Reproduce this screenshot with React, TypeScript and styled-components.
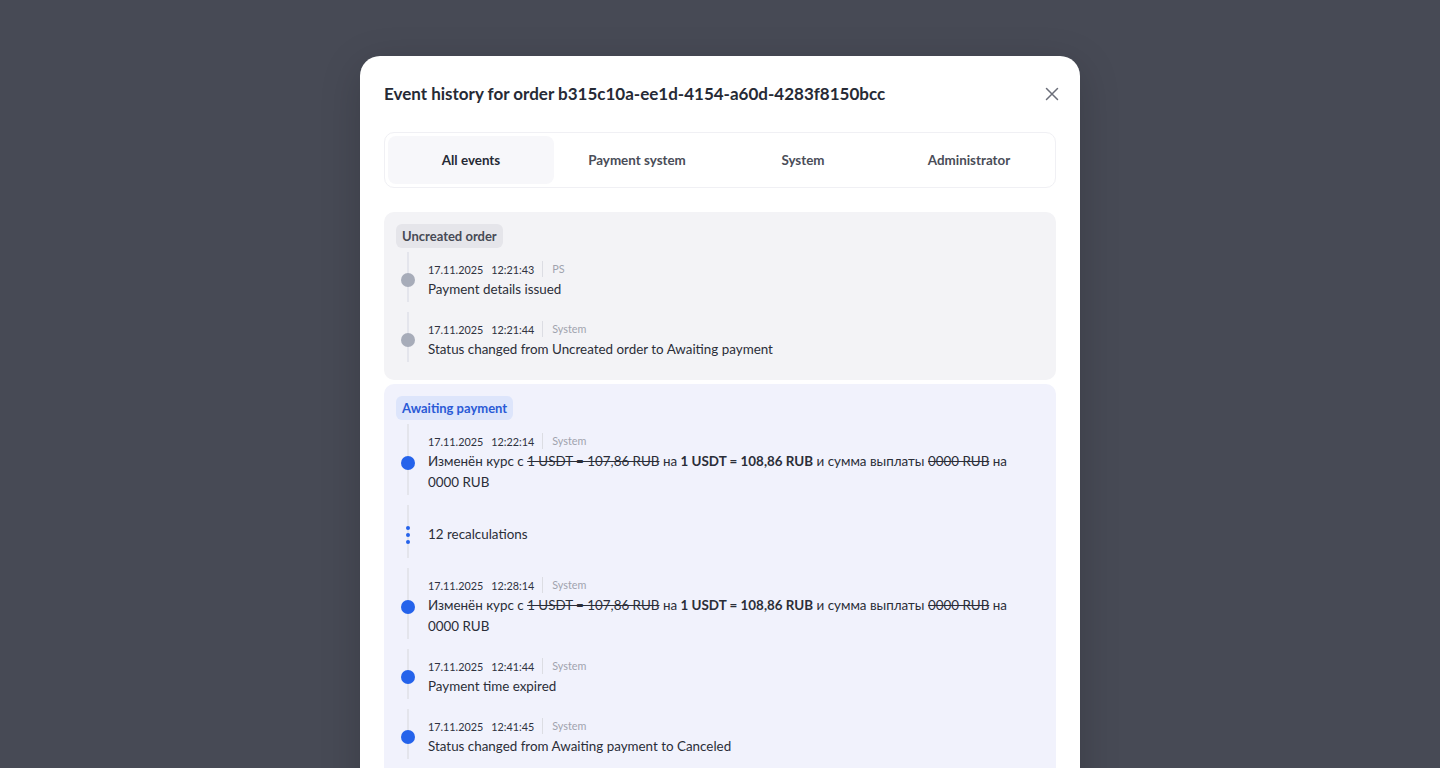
import React from 'react';
import styled, { createGlobalStyle } from 'styled-components';

const GlobalStyle = createGlobalStyle`
  html, body {
    margin: 0;
    padding: 0;
    height: 100%;
    overflow: hidden;
  }
  body {
    font-family: 'Lato', 'Noto Sans', sans-serif;
    background-color: #474a55;
  }
`;

const Overlay = styled.div`
  width: 1440px;
  height: 768px;
  overflow: hidden;
  background-color: #474a55;
  display: flex;
  justify-content: center;
  align-items: flex-start;
`;

const Modal = styled.div`
  width: 720px;
  margin-top: 56px;
  background-color: #ffffff;
  border-radius: 20px;
  padding: 24px 24px 40px;
  box-sizing: border-box;
  box-shadow: 0 10px 40px rgba(0, 0, 0, 0.18);
`;

const Header = styled.div`
  display: flex;
  align-items: center;
  justify-content: space-between;
  height: 28px;
`;

const Title = styled.h2`
  margin: 0;
  font-size: 17px;
  line-height: 28px;
  font-weight: 700;
  color: #262a35;
`;

const CloseButton = styled.button`
  width: 20px;
  height: 20px;
  padding: 0;
  margin-right: -6px;
  border: none;
  background: none;
  display: flex;
  align-items: center;
  justify-content: center;
  cursor: pointer;
`;

const Tabs = styled.div`
  margin-top: 24px;
  display: grid;
  grid-template-columns: repeat(4, 1fr);
  padding: 3px;
  border: 1px solid #f0f0f4;
  border-radius: 10px;
`;

const Tab = styled.div<{ $active?: boolean }>`
  height: 48px;
  display: flex;
  align-items: center;
  justify-content: center;
  border-radius: 8px;
  font-size: 13.4px;
  font-weight: 700;
  color: ${p => (p.$active ? '#262a35' : '#4a4d58')};
  background-color: ${p => (p.$active ? '#f7f7fa' : 'transparent')};
`;

const Groups = styled.div`
  margin-top: 24px;
  display: flex;
  flex-direction: column;
  gap: 4px;
`;

const Group = styled.div<{ $tone: 'gray' | 'blue' }>`
  background-color: ${p => (p.$tone === 'blue' ? '#f1f2fc' : '#f3f3f6')};
  border-radius: 10px;
  padding: 12px 12px 10px;
`;

const Badge = styled.span<{ $tone: 'gray' | 'blue' }>`
  display: inline-flex;
  align-items: center;
  height: 24px;
  padding: 0 6px;
  border-radius: 6px;
  font-size: 13px;
  font-weight: 700;
  background-color: ${p => (p.$tone === 'blue' ? '#dde5fb' : '#e5e5ea')};
  color: ${p => (p.$tone === 'blue' ? '#2a5ad6' : '#474a55')};
  margin-bottom: 2px;
`;

const Row = styled.div<{ $loose?: boolean }>`
  display: flex;
  align-items: center;
  padding: ${p => (p.$loose ? '21px 0' : '10px 0')};
`;

const Rail = styled.div<{ $loose?: boolean }>`
  position: relative;
  width: 24px;
  align-self: stretch;
  margin: ${p => (p.$loose ? '-21px 8px -21px 0' : '-10px 8px -10px 0')};
  display: flex;
  align-items: center;
  justify-content: center;

  &::before {
    content: '';
    position: absolute;
    left: 11px;
    width: 2px;
    top: 2px;
    bottom: 8px;
    background-color: #e4e5ec;
  }
`;

const Dot = styled.span<{ $tone: 'gray' | 'blue' }>`
  position: relative;
  width: 14px;
  height: 14px;
  border-radius: 50%;
  background-color: ${p => (p.$tone === 'blue' ? '#2563eb' : '#a7acb9')};
`;

const MoreDots = styled.span`
  position: relative;
  display: flex;
  flex-direction: column;
  gap: 3px;

  & > i {
    width: 4px;
    height: 4px;
    border-radius: 50%;
    background-color: #2563eb;
  }
`;

const Content = styled.div`
  flex: 1;
  max-width: 580px;
`;

const Meta = styled.div`
  display: flex;
  align-items: center;
  height: 18px;
  font-size: 10.8px;
  color: #2f3240;
  margin-bottom: 1px;
`;

const Time = styled.span`
  margin-left: 8px;
`;

const Source = styled.span`
  margin-left: 8px;
  padding-left: 9px;
  border-left: 1px solid #dcdde3;
  line-height: 16px;
  color: #a0a3ae;
`;

const Text = styled.div`
  font-size: 13.4px;
  line-height: 21px;
  color: #2b2e38;

  b {
    font-weight: 700;
  }
`;

type Ev = {
  date: string;
  time: string;
  source: string;
  body: React.ReactNode;
};

const rateChange = (
  <>
    Изменён курс с <s>1 USDT = 107,86 RUB</s> на <b>1 USDT = 108,86 RUB</b> и сумма выплаты <s>0000 RUB</s> на 0000 RUB
  </>
);

const EventRow: React.FC<{ ev: Ev; tone: 'gray' | 'blue' }> = ({ ev, tone }) => (
  <Row>
    <Rail>
      <Dot $tone={tone} />
    </Rail>
    <Content>
      <Meta>
        <span>{ev.date}</span>
        <Time>{ev.time}</Time>
        <Source>{ev.source}</Source>
      </Meta>
      <Text>{ev.body}</Text>
    </Content>
  </Row>
);

const CloseIcon = () => (
  <svg width="14" height="14" viewBox="0 0 14 14" fill="none">
    <path d="M1.5 1.5L12.5 12.5M12.5 1.5L1.5 12.5" stroke="#6b6e79" strokeWidth="1.5" strokeLinecap="round" />
  </svg>
);

const App: React.FC = () => {
  const first: Ev[] = [
    { date: '17.11.2025', time: '12:21:43', source: 'PS', body: 'Payment details issued' },
    { date: '17.11.2025', time: '12:21:44', source: 'System', body: 'Status changed from Uncreated order to Awaiting payment' },
  ];

  return (
    <Overlay>
      <GlobalStyle />
      <Modal>
        <Header>
          <Title>Event history for order b315c10a-ee1d-4154-a60d-4283f8150bcc</Title>
          <CloseButton aria-label="Close">
            <CloseIcon />
          </CloseButton>
        </Header>

        <Tabs>
          <Tab $active>All events</Tab>
          <Tab>Payment system</Tab>
          <Tab>System</Tab>
          <Tab>Administrator</Tab>
        </Tabs>

        <Groups>
          <Group $tone="gray">
            <Badge $tone="gray">Uncreated order</Badge>
            {first.map(ev => (
              <EventRow key={ev.time} ev={ev} tone="gray" />
            ))}
          </Group>

          <Group $tone="blue">
            <Badge $tone="blue">Awaiting payment</Badge>
            <EventRow tone="blue" ev={{ date: '17.11.2025', time: '12:22:14', source: 'System', body: rateChange }} />
            <Row $loose>
              <Rail $loose>
                <MoreDots>
                  <i />
                  <i />
                  <i />
                </MoreDots>
              </Rail>
              <Content>
                <Text>12 recalculations</Text>
              </Content>
            </Row>
            <EventRow tone="blue" ev={{ date: '17.11.2025', time: '12:28:14', source: 'System', body: rateChange }} />
            <EventRow tone="blue" ev={{ date: '17.11.2025', time: '12:41:44', source: 'System', body: 'Payment time expired' }} />
            <EventRow tone="blue" ev={{ date: '17.11.2025', time: '12:41:45', source: 'System', body: 'Status changed from Awaiting payment to Canceled' }} />
          </Group>
        </Groups>
      </Modal>
    </Overlay>
  );
};

export default App;
